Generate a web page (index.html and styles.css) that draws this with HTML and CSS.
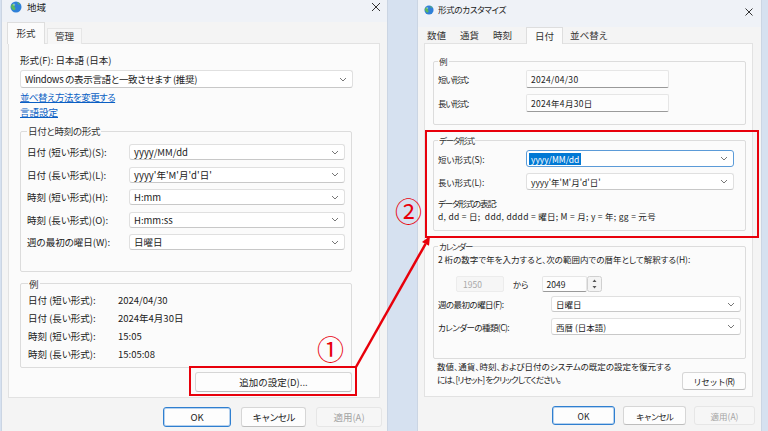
FILE: index.html
```html
<!DOCTYPE html>
<html lang="ja">
  <head>
    <meta charset="UTF-8" />
    <meta name="viewport" content="width=device-width, initial-scale=1.0" />
    <title>地域 - 形式のカスタマイズ</title>
    <link rel="stylesheet" href="styles.css">
  </head>
  <body>
    <div class="desk">
      <!-- 地域 dialog -->
      <section class="win region">
        <header class="titlebar">
          <svg class="app-icon" width="12" height="12" viewBox="0 0 12 12">
            <circle cx="6" cy="6" r="5.5" fill="#2f80d8" />
            <path d="M2.2 3.2c1-.4 1.9-.2 2.4.6.4.7-.3 1.3-.1 2 .2.8 1.2 1 1 1.9-.2.8-1 1.3-1.6 1.6C2.4 8.6 1 7 1 5.2c0-.7.4-1.4 1.2-2z" fill="#5cb85c" />
            <path d="M7.4 1.2c1 .3 2.2 1.2 2.7 2.3-.6.3-1.4 0-1.8-.5-.4-.5-1-.7-.9-1.8z" fill="#5cb85c" />
            <circle cx="4" cy="3.6" r="1.2" fill="#fff" opacity=".35" />
          </svg>
          <span class="title">地域</span>
          <svg class="close" width="10" height="10" viewBox="0 0 10 10">
            <path d="M1 1l8 8M9 1l-8 8" stroke="#333" stroke-width="1" />
          </svg>
        </header>
        <nav class="tabs">
          <span class="tab active">形式</span>
          <span class="tab">管理</span>
        </nav>
        <div class="panel">
          <div class="line">形式(F): 日本語 (日本)</div>
          <div class="combo wide">
            <span class="tight-s">Windows の表示言語と一致させます (推奨)</span>
            <svg class="chev" width="8" height="5" viewBox="0 0 8 5"><path d="M1 1l3 3 3-3" /></svg>
          </div>
          <a class="link first tight-m" href="#">並べ替え方法を変更する</a>
          <a class="link" href="#">言語設定</a>

          <fieldset class="group formats">
            <legend class="tight-s">日付と時刻の形式</legend>
            <div class="row">
              <span class="lbl">日付 (短い形式)(S):</span>
              <div class="combo"><span>yyyy/MM/dd</span><svg class="chev" width="8" height="5" viewBox="0 0 8 5"><path d="M1 1l3 3 3-3" /></svg></div>
            </div>
            <div class="row">
              <span class="lbl">日付 (長い形式)(L):</span>
              <div class="combo"><span>yyyy'年'M'月'd'日'</span><svg class="chev" width="8" height="5" viewBox="0 0 8 5"><path d="M1 1l3 3 3-3" /></svg></div>
            </div>
            <div class="row">
              <span class="lbl">時刻 (短い形式)(H):</span>
              <div class="combo"><span>H:mm</span><svg class="chev" width="8" height="5" viewBox="0 0 8 5"><path d="M1 1l3 3 3-3" /></svg></div>
            </div>
            <div class="row">
              <span class="lbl">時刻 (長い形式)(O):</span>
              <div class="combo"><span>H:mm:ss</span><svg class="chev" width="8" height="5" viewBox="0 0 8 5"><path d="M1 1l3 3 3-3" /></svg></div>
            </div>
            <div class="row">
              <span class="lbl">週の最初の曜日(W):</span>
              <div class="combo"><span>日曜日</span><svg class="chev" width="8" height="5" viewBox="0 0 8 5"><path d="M1 1l3 3 3-3" /></svg></div>
            </div>
          </fieldset>

          <fieldset class="group sample">
            <legend>例</legend>
            <div class="srow"><span class="lbl">日付 (短い形式):</span><span>2024/04/30</span></div>
            <div class="srow"><span class="lbl">日付 (長い形式):</span><span>2024年4月30日</span></div>
            <div class="srow"><span class="lbl">時刻 (短い形式):</span><span>15:05</span></div>
            <div class="srow"><span class="lbl">時刻 (長い形式):</span><span>15:05:08</span></div>
          </fieldset>

          <div class="extra">
            <button class="btn extra-btn">追加の設定(D)...</button>
          </div>
        </div>
        <footer class="actions">
          <button class="btn primary">OK</button>
          <button class="btn tight-l">キャンセル</button>
          <button class="btn disabled">適用(A)</button>
        </footer>
      </section>

      <!-- 形式のカスタマイズ dialog -->
      <section class="win custom">
        <header class="titlebar">
          <svg class="app-icon" width="10" height="10" viewBox="0 0 12 12">
            <circle cx="6" cy="6" r="5.5" fill="#2f80d8" />
            <path d="M2.2 3.2c1-.4 1.9-.2 2.4.6.4.7-.3 1.3-.1 2 .2.8 1.2 1 1 1.9-.2.8-1 1.3-1.6 1.6C2.4 8.6 1 7 1 5.2c0-.7.4-1.4 1.2-2z" fill="#5cb85c" />
            <path d="M7.4 1.2c1 .3 2.2 1.2 2.7 2.3-.6.3-1.4 0-1.8-.5-.4-.5-1-.7-.9-1.8z" fill="#5cb85c" />
            <circle cx="4" cy="3.6" r="1.2" fill="#fff" opacity=".35" />
          </svg>
          <span class="title tight-s">形式のカスタマイズ</span>
          <svg class="close" width="10" height="10" viewBox="0 0 10 10">
            <path d="M1.5 1.5l7 7M8.5 1.5l-7 7" stroke="#333" stroke-width="1" />
          </svg>
        </header>
        <nav class="tabs">
          <span class="tab">数値</span>
          <span class="tab">通貨</span>
          <span class="tab">時刻</span>
          <span class="tab active">日付</span>
          <span class="tab">並べ替え</span>
        </nav>
        <div class="panel">
          <fieldset class="group ex">
            <legend>例</legend>
            <div class="frow"><span class="lbl tight-l">短い形式:</span><div class="field loose">2024/04/30</div></div>
            <div class="frow"><span class="lbl tight-l">長い形式:</span><div class="field loose">2024年4月30日</div></div>
          </fieldset>

          <fieldset class="group datafmt">
            <legend class="tight-l">データ形式</legend>
            <div class="frow">
              <span class="lbl">短い形式(S):</span>
              <div class="combo focus"><span class="sel">yyyy/MM/dd</span><svg class="chev" width="8" height="5" viewBox="0 0 8 5"><path d="M1 1l3 3 3-3" /></svg></div>
            </div>
            <div class="frow">
              <span class="lbl">長い形式(L):</span>
              <div class="combo"><span>yyyy'年'M'月'd'日'</span><svg class="chev" width="8" height="5" viewBox="0 0 8 5"><path d="M1 1l3 3 3-3" /></svg></div>
            </div>
            <div class="notes">
              <div class="tight-l">データ形式の表記:</div>
              <div class="loose">d, dd = 日;&nbsp; ddd, dddd = 曜日; M = 月; y = 年; gg = 元号</div>
            </div>
          </fieldset>

          <fieldset class="group calendar">
            <legend class="tight-l">カレンダー</legend>
            <div class="hint">2 桁の数字で年を入力すると、次の範囲内での暦年として解釈する(H):</div>
            <div class="years">
              <div class="field off">1950</div>
              <span class="kara">から</span>
              <div class="spin">
                <div class="field">2049</div>
                <svg class="spin-btns" width="15" height="16" viewBox="0 0 15 16">
                  <rect x="0.5" y="0.5" width="14" height="15" rx="2" fill="#f4f4f4" stroke="#d0d0d0" />
                  <path d="M5.5 6L7.5 3.5 9.5 6z M5.5 10L7.5 12.5 9.5 10z" fill="#555" />
                </svg>
              </div>
            </div>
            <div class="frow cal">
              <span class="lbl tight-m">週の最初の曜日(F):</span>
              <div class="combo"><span>日曜日</span><svg class="chev" width="8" height="5" viewBox="0 0 8 5"><path d="M1 1l3 3 3-3" /></svg></div>
            </div>
            <div class="frow cal">
              <span class="lbl tight-m">カレンダーの種類(C):</span>
              <div class="combo"><span>西暦 (日本語)</span><svg class="chev" width="8" height="5" viewBox="0 0 8 5"><path d="M1 1l3 3 3-3" /></svg></div>
            </div>
          </fieldset>

          <div class="reset-row">
            <div class="reset-text">
              <div>数値、通貨、時刻、および日付のシステムの既定の設定を復元する</div>
              <div class="tight-ml">には、[リセット] をクリックしてください。</div>
            </div>
            <button class="btn reset-btn tight-m">リセット(R)</button>
          </div>
        </div>
        <footer class="actions">
          <button class="btn primary">OK</button>
          <button class="btn tight-l">キャンセル</button>
          <button class="btn disabled">適用(A)</button>
        </footer>
      </section>

      <!-- red annotations drawn over both dialogs -->
      <svg class="marks" width="768" height="431" viewBox="0 0 768 431">
        <rect x="190" y="367" width="166" height="28" />
        <rect x="426" y="131" width="332" height="106" />
        <line x1="356" y1="367" x2="425.6" y2="243.8" />
        <polygon points="430,236 429,245.8 422,241.9" />
      </svg>
      <span class="num n1">①</span>
      <span class="num n2">②</span>
    </div>
  </body>
</html>
```

FILE: styles.css
```css
* {
  box-sizing: border-box;
}

body {
  margin: 0;
  font-family: "Noto Sans CJK JP", "Noto Sans", sans-serif;
  font-size: 9.5px;
  font-feature-settings: "palt";
  color: #222;
}

.desk {
  position: relative;
  display: flex;
  height: 431px;
  background: #d6e1f0; /* desktop blue between the windows */
  overflow: hidden;
}

.win {
  display: flex;
  flex-direction: column;
  height: 431px;
  background: #f4f4f4;
  box-shadow: 0 0 0 1px rgba(0, 0, 0, 0.05);
}

.region {
  margin-left: 2px;
  width: 385px;
}

.custom {
  margin-left: 31px;
  width: 343px;
  font-size: 8.5px;
}

/* letter spacing to get closer to the narrow kana of the system font */
.tight-s { letter-spacing: -0.3px; }
.tight-m { letter-spacing: -0.55px; }
.tight-ml { letter-spacing: -0.85px; }
.tight-l { letter-spacing: -1.15px; }
.loose { letter-spacing: 0.3px; }

/* title bar */
.titlebar {
  display: flex;
  align-items: flex-start;
  background: #eff2f7;
}

.region .titlebar {
  height: 22px;
  padding: 0 6px 0 8px;
}

.custom .titlebar {
  height: 27px;
  padding: 2px 7px 0 6px;
}

.title {
  line-height: 14px;
  color: #1a1a1a;
}

.region .app-icon {
  margin: 1px 5px 0 0;
}

.custom .app-icon {
  margin: 3px 4px 0 0;
}

.close {
  margin-left: auto;
}

.region .close {
  margin-top: 2px;
}

.custom .close {
  margin-top: 5px;
}

/* tabs */
.tabs {
  position: relative;
  z-index: 1;
  display: flex;
  align-items: flex-end;
  margin-bottom: -1px;
}

.region .tabs {
  height: 22px;
  padding-left: 5px;
}

.custom .tabs {
  height: 17px;
  padding-left: 2px;
  font-size: 9.5px;
}

.tab {
  line-height: 15px;
  color: #333;
}

.region .tab {
  width: 35px;
  height: 16px;
  margin-left: 2px;
  text-align: center;
  background: #f7f7f7;
  border: 1px solid #e6e6e6;
  border-bottom: none;
}

.region .tab.active {
  width: 38px;
  height: 22px;
  margin-left: 0;
  line-height: 20px;
  background: #fbfbfb;
  border-color: #dedede;
}

.custom .tab {
  padding: 0 7px;
  height: 16px;
}

.custom .tab.active {
  margin-left: 7px;
  padding: 0 8px;
  height: 17px;
  line-height: 16px;
  background: #fbfbfb;
  border: 1px solid #dedede;
  border-bottom: none;
}

/* tab page */
.panel {
  display: flex;
  flex-direction: column;
  background: #fbfbfb;
  border: 1px solid #e2e2e2;
}

.region .panel {
  margin: 0 7px 0 6px;
  padding: 9px 27px 5px 11px;
}

.custom .panel {
  margin: 0 8px 0 6px;
  padding: 10px 6px 6px 8px;
}

.line {
  line-height: 14px;
}

.combo {
  display: flex;
  align-items: center;
  justify-content: space-between;
  height: 16px;
  padding: 0 5px 0 4px;
  background: #fff;
  border: 1px solid #e0e0e0;
  border-bottom-color: #c8c8c8;
  border-radius: 3px;
  white-space: nowrap;
}

.combo.wide {
  height: 18px;
  margin-top: 3px;
  width: 333px;
}

.combo.focus {
  border-color: #5b9bd8;
  padding-left: 2px;
}

.sel {
  background: #0078d4;
  color: #fff;
  padding: 0 2px;
  line-height: 12px;
}

.chev path {
  fill: none;
  stroke: #777;
  stroke-width: 1;
}

.link {
  display: block;
  line-height: 15px;
  color: #0a5fc4;
  text-decoration: underline;
  align-self: flex-start;
}

.link.first {
  margin-top: 2px;
}

/* group boxes */
.group {
  margin: 0;
  min-width: 0;
  border: 1px solid #dcdcdc;
  border-radius: 2px;
}

.group legend {
  padding: 0 1px;
  line-height: 14px;
  color: #333;
}

.formats {
  margin-top: 4px;
  padding: 3px 6px 17px;
}

.formats .row {
  display: flex;
  align-items: center;
  height: 22.5px;
}

.formats .lbl {
  width: 102px;
}

.formats .combo {
  width: 216px;
}

.sample {
  margin-top: 5px;
  padding: 0 7px 4px;
}

.srow {
  display: flex;
  align-items: center;
  height: 18px;
}

.sample .lbl {
  width: 90px;
}

.extra {
  display: flex;
  justify-content: flex-end;
  margin-top: 4px;
}

/* buttons */
.btn {
  font-family: inherit;
  font-size: inherit;
  color: #222;
  height: 20px;
  padding: 0;
  background: #fdfdfd;
  border: 1px solid #d6d6d6;
  border-bottom-color: #bdbdbd;
  border-radius: 3px;
}

.btn.primary {
  border-color: #2f7fd0;
  box-shadow: inset 0 0 0 1px rgba(47, 127, 208, 0.35);
}

.btn.disabled {
  color: #a3a3a3;
  background: #f6f6f6;
  border-color: #e6e6e6;
}

.extra-btn {
  width: 157px;
}

.actions {
  display: flex;
  justify-content: flex-end;
  margin-top: 9px;
}

.region .actions {
  gap: 10px;
  padding-right: 5px;
}

.region .actions .btn:nth-child(1) { width: 68px; }
.region .actions .btn:nth-child(2) { width: 65px; }
.region .actions .btn:nth-child(3) { width: 66px; }

.custom .actions {
  gap: 8px;
  padding-right: 6px;
}

.custom .actions .btn {
  height: 19px;
  width: 63px;
}

.custom .actions .btn.disabled {
  width: 61px;
}

/* customize dialog */
.frow {
  display: flex;
  align-items: center;
}

.frow .lbl {
  width: 88px;
  white-space: nowrap;
}

.field {
  display: flex;
  align-items: center;
  height: 18px;
  padding-left: 4px;
  background: #fdfdfd;
  border: 1px solid #e6e6e6;
  border-bottom-color: #9a9a9a;
  border-radius: 2px;
}

.ex {
  padding: 2px 4px 12px;
}

.ex .frow {
  height: 18px;
}

.ex .frow + .frow {
  margin-top: 6px;
}

.ex .field {
  width: 143px;
}

.datafmt {
  margin-top: 8px;
  padding: 3px 4px 8px;
}

.datafmt .frow {
  height: 17px;
}

.datafmt .frow + .frow {
  margin-top: 6px;
}

.datafmt .combo {
  width: 208px;
  height: 17px;
}

.notes {
  margin-top: 7px;
  line-height: 12.5px;
}

.calendar {
  margin-top: 8px;
  padding: 0 4px 23px;
}

.hint {
  line-height: 12px;
}

.years {
  display: flex;
  align-items: center;
  height: 16px;
  margin: 11px 0 0 18px;
}

.years .field {
  height: 16px;
}

.field.off {
  width: 48px;
  padding-left: 6px;
  color: #a8a8a8;
  background: #f6f6f6;
  border-color: #ececec;
}

.kara {
  margin: 0 13px 0 9px;
}

.spin {
  display: flex;
}

.spin .field {
  width: 45px;
}

.calendar .frow .lbl {
  width: 113px;
}

.calendar .combo {
  width: 190px;
}

.calendar .frow {
  margin-top: 4px;
}

.calendar .frow + .frow {
  margin-top: 6px;
}

.calendar .frow + .frow .combo {
  height: 17px;
}

.reset-row {
  display: flex;
  justify-content: space-between;
  align-items: flex-start;
  margin-top: 1px;
  padding-left: 4px;
}

.reset-text {
  line-height: 13px;
  white-space: nowrap;
}

.reset-btn {
  width: 64px;
  height: 18px;
  margin-top: 12px;
}

/* red annotations */
.marks {
  position: absolute;
  left: 0;
  top: 0;
  pointer-events: none;
}

.marks rect,
.marks line {
  fill: none;
  stroke: #e8000b;
  stroke-width: 2;
}

.marks line {
  stroke-width: 2.5;
}

.marks polygon {
  fill: #e8000b;
}

.num {
  position: absolute;
  color: #e8000b;
  font-size: 27px;
  line-height: 1;
}

.n1 {
  left: 317px;
  top: 335px;
}

.n2 {
  left: 395px;
  top: 197px;
}
```
